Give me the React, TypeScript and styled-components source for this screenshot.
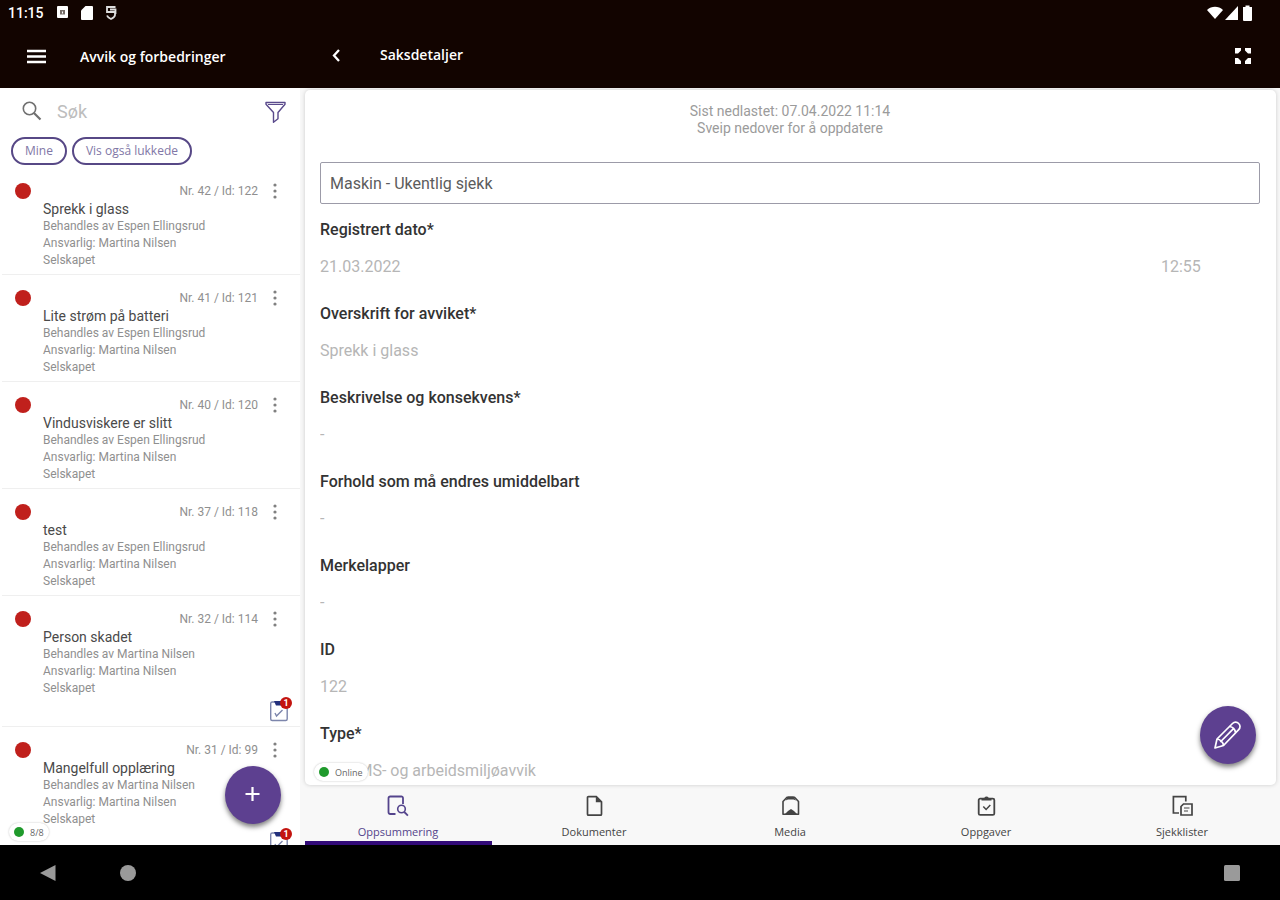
import React from "react";
import styled, { createGlobalStyle } from "styled-components";

const GlobalStyle = createGlobalStyle`
  * { box-sizing: border-box; }
  body { margin: 0; background: #000; font-family: Roboto, sans-serif; }
  button, input { font-family: inherit; }
  h1, h2, h3, p, ul { margin: 0; padding: 0; }
`;

const Screen = styled.div`
  display: flex;
  flex-direction: column;
  height: 100vh;
  overflow: hidden;
  background: #f8f8f8;
`;

const StatusBar = styled.div`
  display: flex;
  align-items: center;
  justify-content: space-between;
  flex: none;
  height: 26px;
  padding: 0 25px 0 8px;
  background: #120400;
  color: #fff;
`;

const StatusGroup = styled.div<{ $gap: number }>`
  display: flex;
  align-items: center;
  gap: ${(p) => p.$gap}px;
`;

const Clock = styled.span`
  font-size: 14px;
  font-weight: 500;
  width: 36px;
`;

const Header = styled.header`
  display: flex;
  flex: none;
  height: 62px;
  background: #120400;
  color: #fff;
`;

const HeaderPart = styled.div<{ $side?: boolean }>`
  display: flex;
  align-items: center;
  width: ${(p) => (p.$side ? "300px" : "auto")};
  flex: ${(p) => (p.$side ? "none" : "1")};
  padding: ${(p) => (p.$side ? "0 0 0 24px" : "0 24px 4px 24px")};
  gap: 32px;
`;

const Title = styled.h1`
  flex: 1;
  font-family: "Open Sans", sans-serif;
  font-size: 14px;
  line-height: 20px;
  font-weight: 600;
`;

const IconButton = styled.button<{ $size?: number }>`
  display: flex;
  flex: none;
  align-items: center;
  justify-content: center;
  width: ${(p) => p.$size ?? 24}px;
  height: 24px;
  padding: 0;
  border: 0;
  background: none;
  color: inherit;
`;

const Main = styled.div`
  display: flex;
  flex: 1;
  min-height: 0;
`;

const Sidebar = styled.aside`
  position: relative;
  display: flex;
  flex-direction: column;
  flex: none;
  width: 300px;
  padding-left: 2px;
  overflow: hidden;
  background: #fff;
`;

const SearchRow = styled.div`
  display: flex;
  align-items: center;
  gap: 14px;
  flex: none;
  height: 48px;
  padding: 0 12px 0 19px;
  color: #5a4a8c;
`;

const SearchInput = styled.input`
  flex: 1;
  min-width: 0;
  padding: 0;
  border: 0;
  outline: 0;
  background: none;
  font-size: 18px;
  line-height: 24px;
  color: #444;
  &::placeholder { color: #bdbdbd; opacity: 1; }
`;

const FilterRow = styled.div`
  display: flex;
  flex: none;
  gap: 5px;
  height: 32px;
  padding: 1px 0 0 9px;
`;

const FilterChip = styled.button`
  height: 28px;
  padding: 0 12px;
  border: 2px solid #574886;
  border-radius: 14px;
  background: #fff;
  color: #8177a6;
  font-family: "Open Sans", sans-serif;
  font-size: 12px;
  line-height: 20px;
`;

const CaseList = styled.ul`
  flex: 1;
  min-height: 0;
  overflow: hidden;
  list-style: none;
`;

const CaseItem = styled.li`
  padding: 14px 8px 5px 13px;
  border-bottom: 1px solid #efefef;
`;

const CaseTop = styled.div`
  display: flex;
  align-items: center;
  height: 18px;
`;

const Dot = styled.span<{ $size: number; $color: string }>`
  flex: none;
  width: ${(p) => p.$size}px;
  height: ${(p) => p.$size}px;
  border-radius: 50%;
  background: ${(p) => p.$color};
`;

const CaseNumber = styled.span`
  flex: 1;
  text-align: right;
  font-size: 12px;
  line-height: 17px;
  color: #8f8f8f;
`;

const CaseBody = styled.div`
  padding-left: 28px;
`;

const CaseTitle = styled.h2`
  font-size: 14px;
  line-height: 18px;
  font-weight: 400;
  color: #4a4a4a;
`;

const CaseLine = styled.p`
  font-size: 12px;
  line-height: 17px;
  color: #8f8f8f;
`;

const TaskRow = styled.div`
  display: flex;
  justify-content: flex-end;
  height: 24px;
`;

const TaskMark = styled.span`
  position: relative;
  width: 24px;
  height: 26px;
`;

const TaskBadge = styled.span`
  position: absolute;
  top: 0;
  right: 0;
  width: 12px;
  height: 12px;
  border-radius: 50%;
  background: #c3140f;
  color: #fff;
  font-size: 9px;
  line-height: 12px;
  font-weight: 700;
  text-align: center;
`;

const Fab = styled.button<{ $right: number; $bottom: number }>`
  position: absolute;
  right: ${(p) => p.$right}px;
  bottom: ${(p) => p.$bottom}px;
  display: flex;
  align-items: center;
  justify-content: center;
  width: 56px;
  height: 58px;
  padding: 0;
  border: 0;
  border-radius: 50%;
  background: #5d4090;
  color: #fff;
  box-shadow: 0 3px 5px rgba(0, 0, 0, 0.5);
`;

const StatusChip = styled.span<{ $left: number; $bottom: number }>`
  position: absolute;
  left: ${(p) => p.$left}px;
  bottom: ${(p) => p.$bottom}px;
  display: flex;
  align-items: center;
  gap: 6px;
  height: 18px;
  padding: 0 5px;
  border-radius: 9px;
  background: #fff;
  box-shadow: 0 0 2px rgba(0, 0, 0, 0.25);
  color: #666;
  font-family: "Open Sans", sans-serif;
  font-size: 9px;
`;

const Detail = styled.main`
  display: flex;
  flex-direction: column;
  flex: 1;
  min-width: 0;
  background: #f8f8f8;
`;

const CardArea = styled.div`
  position: relative;
  display: flex;
  flex: 1;
  min-height: 0;
  padding: 2px 4px 1px 5px;
`;

const Card = styled.section`
  flex: 1;
  min-width: 0;
  padding: 13px 16px 0 15px;
  overflow: hidden;
  border-radius: 5px;
  background: #fff;
  box-shadow: 0 0 4px rgba(0, 0, 0, 0.18);
`;

const Refresh = styled.div`
  margin-bottom: 25px;
  text-align: center;
  color: #9b9b9b;
`;

const RefreshLine = styled.p`
  font-size: 14px;
  line-height: 17px;
`;

const CaseType = styled.input`
  display: block;
  width: 100%;
  height: 42px;
  margin-bottom: 16px;
  padding: 0 9px;
  border: 1px solid #9c9ba8;
  border-radius: 2px;
  outline: 0;
  background: #fff;
  color: #5c5c5c;
  font-size: 16px;
`;

const Field = styled.div`
  padding-bottom: 27px;
`;

const Label = styled.label`
  display: block;
  margin-bottom: 17px;
  font-size: 16px;
  line-height: 20px;
  font-weight: 500;
  color: #333;
`;

const ValueRow = styled.div`
  display: flex;
`;

const Value = styled.input<{ $width?: number; $indent?: number }>`
  display: block;
  flex: ${(p) => (p.$width ? `0 0 ${p.$width}px` : "1")};
  width: ${(p) => (p.$width ? `${p.$width}px` : "auto")};
  min-width: 0;
  height: 20px;
  padding: 0 0 0 ${(p) => p.$indent ?? 0}px;
  border: 0;
  outline: 0;
  background: none;
  color: #b6b6b6;
  font-size: 16px;
  line-height: 20px;
`;

const Tabs = styled.nav`
  display: flex;
  flex: none;
  height: 59px;
`;

const Tab = styled.button<{ $active?: boolean }>`
  display: flex;
  flex: 1;
  flex-direction: column;
  align-items: center;
  padding: 9px 0 0;
  border: 0;
  background: none;
  color: ${(p) => (p.$active ? "#54448c" : "#444")};
  font-family: "Open Sans", sans-serif;
  font-size: 11px;
  line-height: 16px;
`;

const TabLabel = styled.span`
  margin-top: 7px;
`;

const TabBar = styled.span`
  align-self: stretch;
  height: 4px;
  margin: auto 4px 0 5px;
  background: #320a78;
`;

const SystemNav = styled.nav`
  display: flex;
  align-items: center;
  flex: none;
  gap: 56px;
  height: 55px;
  padding: 0 36px;
  background: #000;
  color: #9a9a9a;
`;

const Spacer = styled.span`
  flex: 1;
`;

const stroke = { fill: "none", stroke: "currentColor" } as const;

const MenuIcon = () => (
  <svg width="20" height="16" viewBox="0 0 20 16" {...stroke} strokeWidth="2.4">
    <path d="M1 2h19M1 7.500h19M1 13h19" />
  </svg>
);

const BackIcon = () => (
  <svg width="10" height="14" viewBox="0 0 10 14" {...stroke} strokeWidth="2.3">
    <path d="M8 2 3 7.500 8 13" />
  </svg>
);

const FullscreenIcon = () => (
  <svg width="18" height="18" viewBox="0 0 18 18" fill="currentColor">
    <path d="M1 2h6v2.500L4 7.500H1zM11 2h6v5.500h-3l-3-3zM1 12h3l3 3v3H1zM14 12h3v6h-6v-3z" />
  </svg>
);

const SearchIcon = () => (
  <svg width="22" height="22" viewBox="0 0 22 22" fill="none" stroke="#707070" strokeWidth="1.6">
    <circle cx="8.5" cy="7.5" r="6.2" />
    <path d="M13 12l6.5 6.5" strokeWidth="2.2" />
  </svg>
);

const FunnelIcon = () => (
  <svg width="22" height="24" viewBox="0 0 22 24" {...stroke} strokeWidth="1.4" strokeLinejoin="round">
    <path d="M1 2.500h19v1.800l-7 8.200v6.300l-4.500 3.500v-9.800L1 4.300z" />
    <path d="M3 4.500h15" strokeWidth="1" />
  </svg>
);

const MoreIcon = () => (
  <svg width="6" height="18" viewBox="0 0 6 18" fill="#808080">
    <circle cx="3" cy="3" r="1.6" />
    <circle cx="3" cy="9" r="1.6" />
    <circle cx="3" cy="15" r="1.6" />
  </svg>
);

const TaskIcon = () => (
  <svg width="24" height="26" viewBox="0 0 24 26" fill="none" stroke="#7d86ac" strokeWidth="1.4">
    <rect x="2.7" y="5" width="16.500" height="18.500" rx="1.5" />
    <path d="M6 4h10v4.500H8z" fill="#23307c" stroke="none" />
    <path d="M7 16l1.500 3 6-6" />
  </svg>
);

const PlusIcon = () => (
  <svg width="16" height="16" viewBox="0 0 16 16" {...stroke} strokeWidth="2.2">
    <path d="M7.500 0v14M.5 7h14" />
  </svg>
);

const PencilIcon = () => (
  <svg width="30" height="30" viewBox="0 0 30 30" {...stroke} strokeWidth="1.7" strokeLinejoin="round">
    <path d="M2 28 4 19 19.500 3.500a4.300 4.300 0 0 1 6.200 0 4.300 4.300 0 0 1 0 6.200L10.500 25.500z" />
    <path d="M4 19c3 .2 6.300 3 6.500 6.500M16.500 6.500c3 .3 5.500 2.800 6 6M7.300 22 20.500 8.700" />
  </svg>
);

const SummaryIcon = () => (
  <svg width="22" height="22" viewBox="0 0 22 22" {...stroke} strokeWidth="1.8">
    <path d="M8.500 19H3.200a1.700 1.700 0 0 1-1.700-1.700V3.200A1.700 1.700 0 0 1 3.200 1.500h11A1.700 1.700 0 0 1 16 3.200V9" />
    <circle cx="14.500" cy="14" r="3.800" strokeWidth="1.6" />
    <path d="m17.300 17 3.600 3.600" />
  </svg>
);

const DocumentIcon = () => (
  <svg width="22" height="22" viewBox="0 0 22 22" {...stroke} strokeWidth="1.7">
    <path d="M5.500 1.600h7.800l5.200 5.200v12.400a1 1 0 0 1-1 1h-12a1 1 0 0 1-1-1V2.600a1 1 0 0 1 1-1z" />
    <path d="M12.800 1.500v5.800h5.700z" fill="currentColor" stroke="none" />
  </svg>
);

const MediaIcon = () => (
  <svg width="22" height="22" viewBox="0 0 22 22" {...stroke} strokeWidth="1.6">
    <path d="M4 6.500 8 2.200h7.500l4 4.300v12.800H4z" strokeLinejoin="round" />
    <path d="M6.500 5.500 9 1.500h5.500l2.500 4-2.500-1H9z" fill="currentColor" stroke="none" />
    <path d="M5.500 19.500 9 16l3-2 3 2 3.500 3.500z" fill="currentColor" stroke="none" />
  </svg>
);

const ClipboardIcon = () => (
  <svg width="22" height="22" viewBox="0 0 22 22" {...stroke} strokeWidth="1.8">
    <rect x="3.700" y="3.600" width="15.600" height="16.300" rx="1.500" />
    <path d="M6.500 5.500v-2L9.500 2.800a2.200 2.200 0 0 1 4 0l3 .7v2z" fill="currentColor" stroke="none" />
    <path d="m8.300 11.500 2.800 3 4.200-4.500" strokeWidth="1.500" />
  </svg>
);

const ChecklistIcon = () => (
  <svg width="22" height="22" viewBox="0 0 22 22" {...stroke} strokeWidth="1.7">
    <path d="M8 18H2.400V1.600h12.400V6.500" />
    <path d="M10 11.500V20h11V9h-8.500z" />
    <path d="M13 13h5.500M13 16h4" strokeWidth="1.200" />
  </svg>
);

type Case = { nr: number; id: number; title: string; handler: string; tasks?: number };

const cases: Case[] = [
  { nr: 42, id: 122, title: "Sprekk i glass", handler: "Espen Ellingsrud" },
  { nr: 41, id: 121, title: "Lite strøm på batteri", handler: "Espen Ellingsrud" },
  { nr: 40, id: 120, title: "Vindusviskere er slitt", handler: "Espen Ellingsrud" },
  { nr: 37, id: 118, title: "test", handler: "Espen Ellingsrud" },
  { nr: 32, id: 114, title: "Person skadet", handler: "Martina Nilsen", tasks: 1 },
  { nr: 31, id: 99, title: "Mangelfull opplæring", handler: "Martina Nilsen", tasks: 1 },
];

const fields = [
  { id: "dato", label: "Registrert dato*", value: "21.03.2022", time: "12:55" },
  { id: "overskrift", label: "Overskrift for avviket*", value: "Sprekk i glass" },
  { id: "beskrivelse", label: "Beskrivelse og konsekvens*", value: "-" },
  { id: "forhold", label: "Forhold som må endres umiddelbart", value: "-" },
  { id: "merkelapper", label: "Merkelapper", value: "-" },
  { id: "id", label: "ID", value: "122" },
  { id: "type", label: "Type*", value: "HMS- og arbeidsmiljøavvik", indent: 27 },
];

const tabs = [
  { label: "Oppsummering", icon: <SummaryIcon />, active: true },
  { label: "Dokumenter", icon: <DocumentIcon /> },
  { label: "Media", icon: <MediaIcon /> },
  { label: "Oppgaver", icon: <ClipboardIcon /> },
  { label: "Sjekklister", icon: <ChecklistIcon /> },
];

export default function App() {
  return (
    <Screen>
      <GlobalStyle />
      <StatusBar>
        <StatusGroup $gap={12}>
          <Clock>11:15</Clock>
          <svg width="12" height="14" viewBox="0 0 12 14">
            <rect x="1" y="0" width="11" height="12" rx="1" fill="#fff" />
            <path d="M4 4h5v4.500H4z" fill="#776e69" />
            <path d="M6 5.500h1v2H6z" fill="#fff" />
          </svg>
          <svg width="13" height="14" viewBox="0 0 13 14" fill="#fff">
            <path d="M5.500 0H12a1 1 0 0 1 1 1v12a1 1 0 0 1-1 1H2a1 1 0 0 1-1-1V4.500z" />
          </svg>
          <svg width="12" height="16" viewBox="0 0 12 16" fill="none" stroke="#ddd" strokeWidth="1.8">
            <path d="M10.500 2H2v5h8v3c0 2-2 3-4 4-2-1-3.500-2-4-3.500M5 4.500h5.500V9" />
          </svg>
        </StatusGroup>
        <StatusGroup $gap={2}>
          <svg width="16" height="14" viewBox="0 0 16 14" fill="#fff">
            <path d="M8 13 0 4C4.500-.2 11.500-.2 16 4z" />
          </svg>
          <svg width="14" height="14" viewBox="0 0 14 14" fill="#fff">
            <path d="M13 0v14H0z" />
          </svg>
          <svg width="14" height="16" viewBox="0 0 14 16" fill="#fff">
            <path d="M4.500 2V.5h4V2H11v13a1 1 0 0 1-1 1H3a1 1 0 0 1-1-1V2z" />
          </svg>
        </StatusGroup>
      </StatusBar>

      <Header>
        <HeaderPart $side>
          <IconButton aria-label="Meny"><MenuIcon /></IconButton>
          <Title>Avvik og forbedringer</Title>
        </HeaderPart>
        <HeaderPart>
          <IconButton aria-label="Tilbake"><BackIcon /></IconButton>
          <Title as="h2">Saksdetaljer</Title>
          <IconButton aria-label="Fullskjerm" $size={26}><FullscreenIcon /></IconButton>
        </HeaderPart>
      </Header>

      <Main>
        <Sidebar>
          <SearchRow>
            <SearchIcon />
            <SearchInput type="search" aria-label="Søk" placeholder="Søk" />
            <IconButton aria-label="Filter"><FunnelIcon /></IconButton>
          </SearchRow>
          <FilterRow>
            <FilterChip>Mine</FilterChip>
            <FilterChip>Vis også lukkede</FilterChip>
          </FilterRow>
          <CaseList>
            {cases.map((c) => (
              <CaseItem key={c.id}>
                <CaseTop>
                  <Dot $size={16} $color="#c0201c" />
                  <CaseNumber>Nr. {c.nr} / Id: {c.id}</CaseNumber>
                  <IconButton aria-label="Flere valg" $size={34}><MoreIcon /></IconButton>
                </CaseTop>
                <CaseBody>
                  <CaseTitle>{c.title}</CaseTitle>
                  <CaseLine>Behandles av {c.handler}</CaseLine>
                  <CaseLine>Ansvarlig: Martina Nilsen</CaseLine>
                  <CaseLine>Selskapet</CaseLine>
                </CaseBody>
                {c.tasks && (
                  <TaskRow>
                    <TaskMark>
                      <TaskIcon />
                      <TaskBadge>{c.tasks}</TaskBadge>
                    </TaskMark>
                  </TaskRow>
                )}
              </CaseItem>
            ))}
          </CaseList>
          <Fab aria-label="Ny sak" $right={19} $bottom={21}><PlusIcon /></Fab>
          <StatusChip $left={9} $bottom={4}>
            <Dot $size={10} $color="#1f9a2c" />8/8
          </StatusChip>
        </Sidebar>

        <Detail>
          <CardArea>
            <Card>
              <Refresh>
                <RefreshLine>Sist nedlastet: 07.04.2022 11:14</RefreshLine>
                <RefreshLine>Sveip nedover for å oppdatere</RefreshLine>
              </Refresh>
              <CaseType aria-label="Skjema" readOnly value="Maskin - Ukentlig sjekk" />
              {fields.map((f) => (
                <Field key={f.id}>
                  <Label htmlFor={f.id}>{f.label}</Label>
                  <ValueRow>
                    <Value id={f.id} readOnly value={f.value} $indent={f.indent} />
                    {f.time && <Value aria-label="Klokkeslett" readOnly value={f.time} $width={99} />}
                  </ValueRow>
                </Field>
              ))}
            </Card>
            <Fab aria-label="Rediger" $right={24} $bottom={22}><PencilIcon /></Fab>
            <StatusChip $left={14} $bottom={5}>
              <Dot $size={10} $color="#1f9a2c" />Online
            </StatusChip>
          </CardArea>
          <Tabs>
            {tabs.map((t) => (
              <Tab key={t.label} $active={t.active}>
                {t.icon}
                <TabLabel>{t.label}</TabLabel>
                {t.active && <TabBar />}
              </Tab>
            ))}
          </Tabs>
        </Detail>
      </Main>

      <SystemNav>
        <IconButton aria-label="Tilbake">
          <svg width="16" height="18" viewBox="0 0 16 18" fill="currentColor"><path d="M15.500 1v16L0 9z" /></svg>
        </IconButton>
        <IconButton aria-label="Hjem"><Dot $size={16} $color="#9a9a9a" /></IconButton>
        <Spacer />
        <IconButton aria-label="Oversikt">
          <svg width="16" height="16" viewBox="0 0 16 16" fill="currentColor"><rect width="16" height="16" rx="1.500" /></svg>
        </IconButton>
      </SystemNav>
    </Screen>
  );
}
